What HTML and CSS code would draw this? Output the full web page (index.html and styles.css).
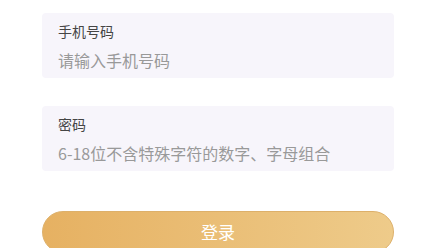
FILE: index.html
```html
<!DOCTYPE html>
<html lang="zh">
<head>
    <meta charset="UTF-8" />
    <meta name="viewport" content="width=device-width, initial-scale=1" />
    <title>登录</title>
    <link rel="stylesheet" href="styles.css">
</head>
<body>
    <div class="login">
        <div class="field">
            <label for="phone">手机号码</label>
            <input type="text" id="phone" placeholder="请输入手机号码" />
        </div>
        <div class="field">
            <label for="pwd">密码</label>
            <input type="password" id="pwd" placeholder="6-18位不含特殊字符的数字、字母组合" />
        </div>
        <button class="submit">登录</button>
    </div>
</body>
</html>
```

FILE: styles.css
```css
* {
    box-sizing: border-box;
    margin: 0;
    padding: 0;
    font-family: "Noto Sans CJK SC", "Noto Sans", sans-serif;
}

body {
    background: #ffffff;
    overflow: hidden;
}

.login {
    width: 352px;
    margin-left: 42px;
    padding-top: 13px;
    display: flex;
    flex-direction: column;
    gap: 28px;
}

.field {
    background: #f7f5fb;
    border-radius: 4px;
    padding: 8px 16px 6px;
    display: flex;
    flex-direction: column;
    gap: 7px;
}

.field label {
    font-size: 14px;
    line-height: 20px;
    color: #454545;
}

.field input {
    border: none;
    outline: none;
    background: transparent;
    font-size: 16px;
    line-height: 24px;
    height: 24px;
    color: #333;
}

.field input::placeholder {
    color: #999999;
}

.submit {
    margin-top: 12px;
    height: 42px;
    padding-bottom: 2px;
    border: 1px solid #ddb06a;
    border-radius: 21px;
    background: linear-gradient(90deg, #e6b162, #eecb8a);
    color: #ffffff;
    font-size: 17px;
    cursor: pointer;
}
```
